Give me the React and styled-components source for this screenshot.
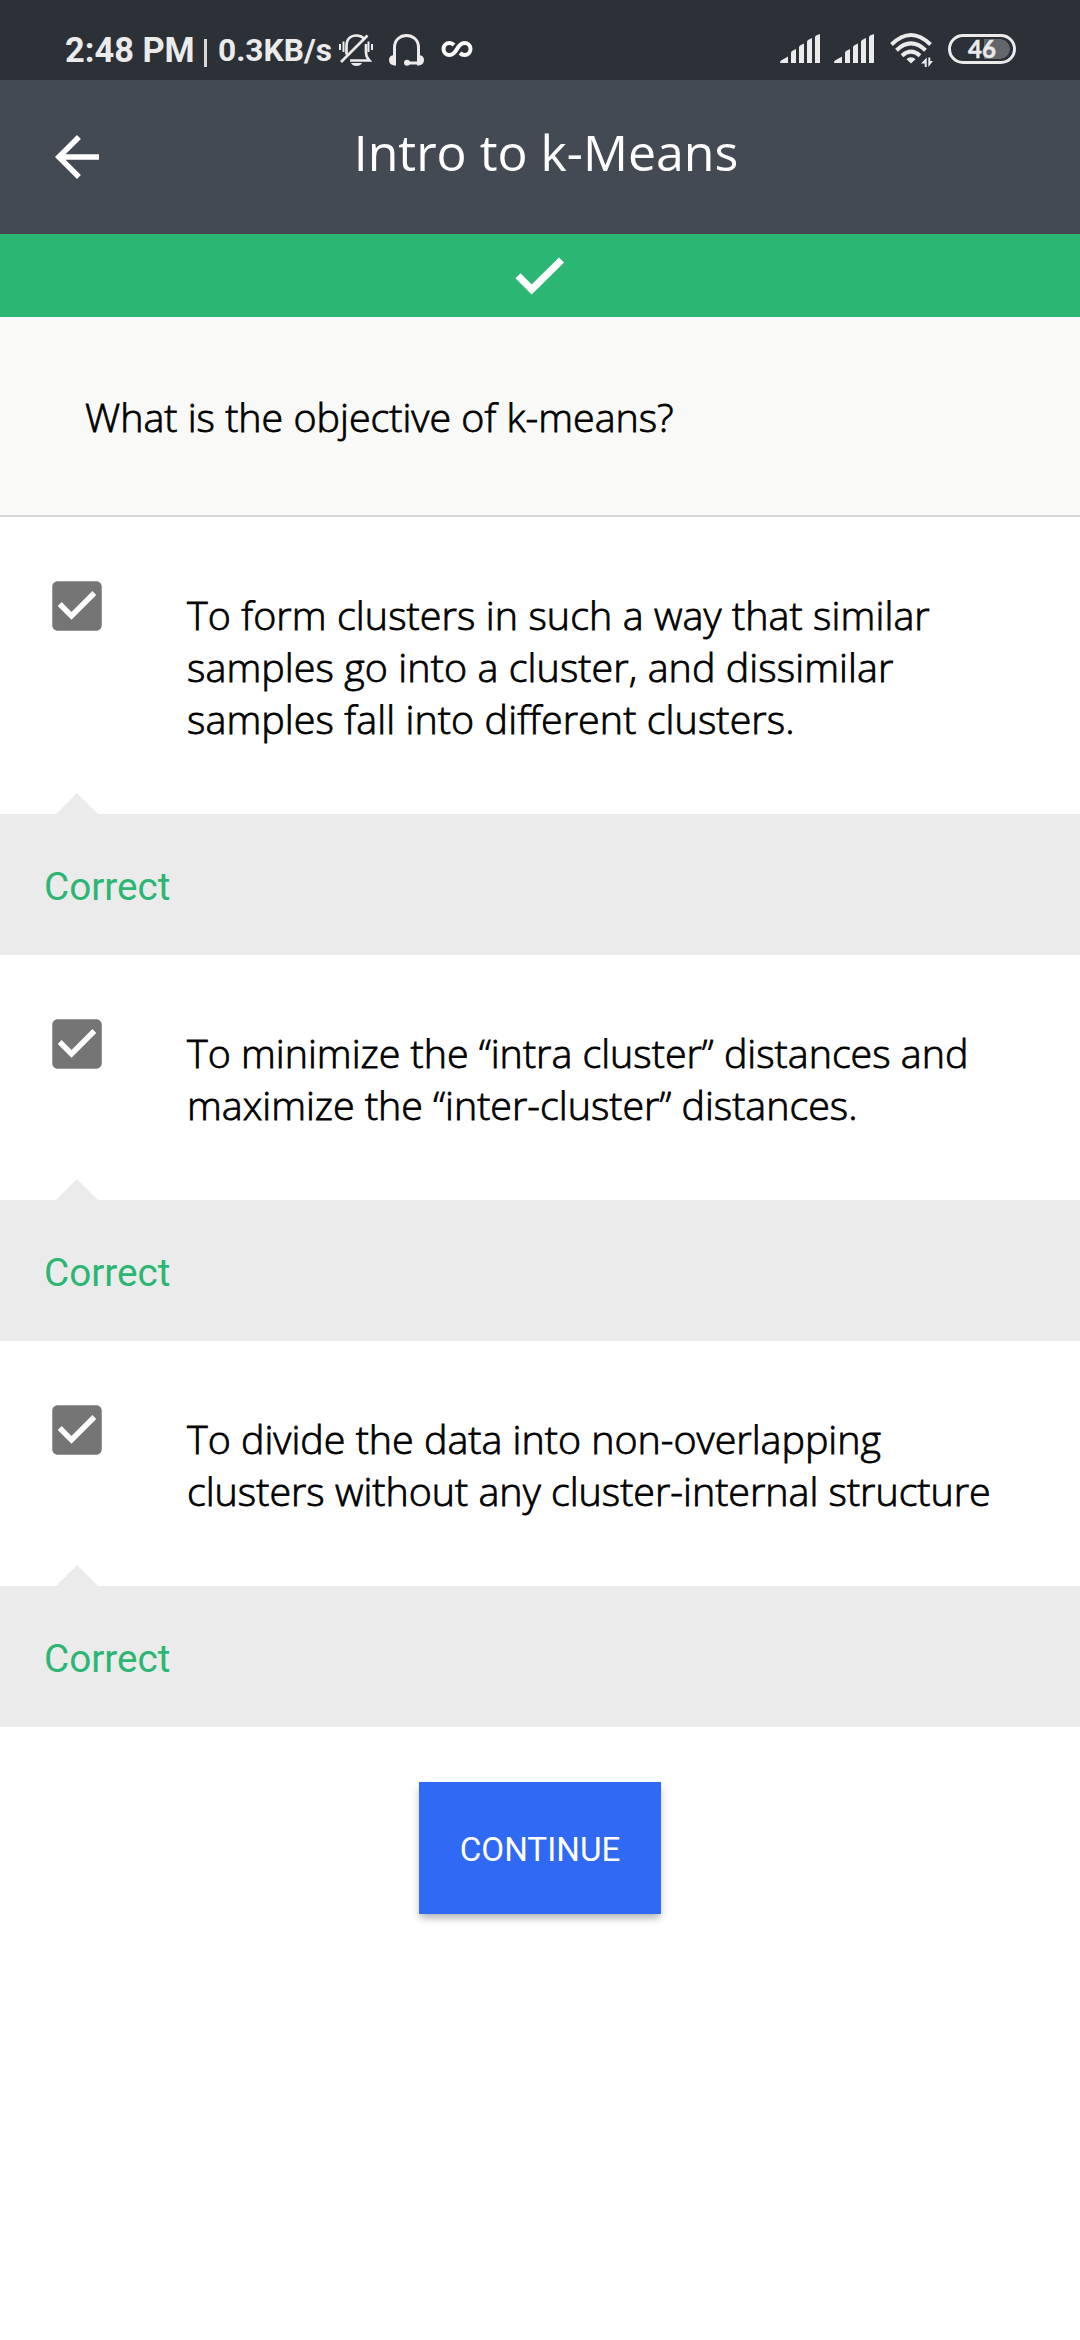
import React from "react";
import styled, { createGlobalStyle } from "styled-components";

const GlobalStyle = createGlobalStyle`
  * { box-sizing: border-box; }
  body { margin: 0; background: #fff; }
`;

const Screen = styled.div`
  width: 1080px;
  min-height: 2340px;
  background: #fff;
  color: #000;
  font-family: "Open Sans", "Noto Sans", sans-serif;
`;

const StatusBar = styled.div`
  height: 80px;
  background: #2c3037;
  color: #ebebeb;
  display: flex;
  align-items: flex-start;
  padding: 29px 64px 0 65px;
  font-family: Roboto, sans-serif;
  font-weight: 700;
  line-height: 42px;
  white-space: pre;
`;

const Clock = styled.span`
  font-size: 34.4px;
  width: 130px;
`;

const Divider = styled.span`
  width: 3px;
  height: 28px;
  margin: 10px 11px 0 9px;
  background: #d8d8d8;
`;

const Speed = styled.span`
  font-size: 31.7px;
  line-height: 44px;
  width: 121px;
`;

const StatusIcon = styled.svg`
  flex: none;
  display: block;
  margin-left: ${(p) => p.$gap || 0}px;
  overflow: visible;
`;

const Spacer = styled.div`
  flex: 1;
`;

const Battery = styled.div`
  width: 68px;
  height: 30px;
  margin: 5px 0 0 15px;
  border: 3px solid #ebebeb;
  border-radius: 15px;
  display: flex;
  justify-content: center;
  align-items: center;
  background: radial-gradient(circle at 49px 12px, #63666b 9.500px, transparent 10px),
    linear-gradient(#63666b, #63666b) 33px 2px / 16px 20px no-repeat;
  font: 700 24px/24px Lato, sans-serif;
  -webkit-text-stroke: 0.5px #ebebeb;
`;

const Header = styled.header`
  height: 154px;
  background: #444a54;
  display: grid;
  grid-template-columns: 153px 1fr 141px;
  align-items: start;
`;

const BackButton = styled.button`
  border: 0;
  padding: 0;
  background: none;
  margin: 44px 0 0 44px;
  width: 66px;
  height: 66px;
  color: #fff;
`;

const Title = styled.h1`
  margin: 38px 0 0;
  color: #fff;
  text-align: center;
  font-size: 50px;
  line-height: 68px;
  font-weight: 400;
`;

const ResultBanner = styled.div`
  height: 83px;
  background: #2cb673;
  display: flex;
  align-items: center;
  justify-content: center;
`;

const Question = styled.div`
  height: 200px;
  padding: 74px 85px 0;
  background: #f9f9f8;
  border-bottom: 2px solid #d6d6d6;
  font-size: 39.4px;
  font-weight: 300;
  -webkit-text-stroke: 0.8px #000;
  line-height: 52px;
`;

const Option = styled.div`
  display: flex;
  height: ${(p) => p.$height}px;
  padding: 56px 0 0 44px;
  font-size: 39.4px;
  font-weight: 300;
  -webkit-text-stroke: 0.8px #000;
  letter-spacing: ${(p) => p.$tracking || 0}px;
  line-height: 52px;
`;

const Checkbox = styled.svg`
  width: 66px;
  height: 66px;
  flex: none;
`;

const OptionText = styled.div`
  margin: 16px 0 0 77px;
  white-space: nowrap;
`;

const Feedback = styled.div`
  position: relative;
  height: 141px;
  padding: 5px 0 0 44px;
  background: #ebebeb;
  color: #2cb673;
  display: flex;
  align-items: center;
  font: 400 38.7px/46px Roboto, sans-serif;

  &::before {
    content: "";
    position: absolute;
    left: 56px;
    top: -21px;
    border: 21px solid transparent;
    border-top: 0;
    border-bottom-color: #ebebeb;
  }
`;

const Actions = styled.div`
  display: flex;
  justify-content: center;
  padding-top: 55px;
`;

const ContinueButton = styled.button`
  width: 242px;
  height: 132px;
  border: 0;
  padding: 3px 0 0;
  background: #3069f4;
  color: #fff;
  font: 400 33.2px/40px Roboto, sans-serif;
  box-shadow: 0 5px 8px -1px rgba(0, 0, 0, 0.3);
`;

const Signal = ({ gap }) => (
  <StatusIcon $gap={gap} width="40" height="40" fill="#ebebeb">
    <path d="M0 33.500q0-1 1-2l7-4v6.500H1q-1 0-1-.5zM11 24q0-1 1-2l4-2v14h-5zM19 18.500q0-1 1-2l4-2v19.500h-5zM27 13q0-1 1-2l4-2v25h-5zM35 8.500q0-1 1-2l4-1.500v29h-5z" />
  </StatusIcon>
);

const options = [
  {
    height: 297,
    tracking: 0.09,
    lines: [
      "To form clusters in such a way that similar",
      "samples go into a cluster, and dissimilar",
      "samples fall into different clusters.",
    ],
  },
  {
    height: 245,
    lines: ["To minimize the “intra cluster” distances and", "maximize the “inter-cluster” distances."],
  },
  {
    height: 245,
    lines: ["To divide the data into non-overlapping", "clusters without any cluster-internal structure"],
  },
];

export default function App() {
  return (
    <Screen>
      <GlobalStyle />
      <StatusBar>
        <Clock>2:48 PM</Clock>
        <Divider />
        <Speed>0.3KB/s</Speed>
        <StatusIcon width="34" height="40" fill="none" stroke="#ebebeb" strokeWidth="2.700">
          <path d="M7.500 25.500V17c0-6.500 4-10.500 10-10.500 3 0 5.500 1 7.500 3M27 15v9c0 4 1.500 5 3.500 7.500H11M2 33L28.500 6.500" />
          <path d="M1 15v6M4.500 12.500v10.500M29.500 12.500v10.500M33 15v6" strokeWidth="2" />
          <path d="M12 34h11c-1.500 4-9.500 4-11 0z" fill="#ebebeb" stroke="none" />
        </StatusIcon>
        <StatusIcon $gap={16} width="35" height="40" fill="none" stroke="#ebebeb" strokeWidth="3">
          <path d="M5.500 33V18.500C5.500 2.500 29.500 2.500 29.500 18.500v14.500M18 34h12" />
          <path d="M7 26v10.500H5q-5-1-5-5.500T5 26zM28 26v10.500h2q5-1 5-5.500T30 26z" fill="#ebebeb" stroke="none" />
          <circle cx="18" cy="33.800" r="3" fill="#ebebeb" stroke="none" />
        </StatusIcon>
        <StatusIcon $gap={17} width="32" height="40" fill="none" stroke="#fff" strokeWidth="4">
          <path d="M13 16C11.500 14.500 10.200 14 8.500 14a6 6 0 0 0 0 12c3.500 0 5.500-2.500 7.500-6s4-6 7.500-6a6 6 0 0 1 0 12c-1.700 0-3-.5-4.500-2" />
        </StatusIcon>
        <Spacer />
        <Signal />
        <Signal gap={14} />
        <StatusIcon $gap={16} width="43" height="40" fill="none" stroke="#ebebeb" strokeWidth="4">
          <path d="M1.500 15.500q19.500-19 39 0M6.500 21.200q14.500-13.500 29 0M12 26.700q9-8 18 0" />
          <path d="M21 28.300q3 0 4.500 2L21 34.500l-4.500-4.200q1.500-2 4.500-2z" fill="#ebebeb" stroke="none" />
          <path d="M36.700 28.500V38h-2v-3.500H31zM38.300 38v-9.500h2V32H43z" fill="#ebebeb" stroke="none" />
        </StatusIcon>
        <Battery>46</Battery>
      </StatusBar>
      <Header>
        <BackButton aria-label="Back">
          <svg width="66" height="66" viewBox="0 0 24 24" fill="currentColor">
            <path d="M20 11H7.830l5.590-5.590L12 4l-8 8 8 8 1.410-1.410L7.830 13H20z" />
          </svg>
        </BackButton>
        <Title>Intro to k-Means</Title>
      </Header>
      <ResultBanner>
        <svg width="66" height="66" viewBox="0 0 66 66">
          <path d="M11 32.700L24.700 46.500L54.500 17" fill="none" stroke="#fff" strokeWidth="7.200" />
        </svg>
      </ResultBanner>
      <Question>What is the objective of k-means?</Question>
      {options.map((option) => (
        <React.Fragment key={option.lines[0]}>
          <Option $height={option.height} $tracking={option.tracking}>
            <Checkbox viewBox="0 0 24 24" fill="#757575">
              <path d="M19 3H5c-1.110 0-2 .9-2 2v14c0 1.100.890 2 2 2h14c1.110 0 2-.9 2-2V5c0-1.100-.890-2-2-2zm-9 14l-5-5 1.410-1.410L10 14.170l7.590-7.590L19 8l-9 9z" />
            </Checkbox>
            <OptionText>
              {option.lines.map((line) => (
                <div key={line}>{line}</div>
              ))}
            </OptionText>
          </Option>
          <Feedback>Correct</Feedback>
        </React.Fragment>
      ))}
      <Actions>
        <ContinueButton>CONTINUE</ContinueButton>
      </Actions>
    </Screen>
  );
}
